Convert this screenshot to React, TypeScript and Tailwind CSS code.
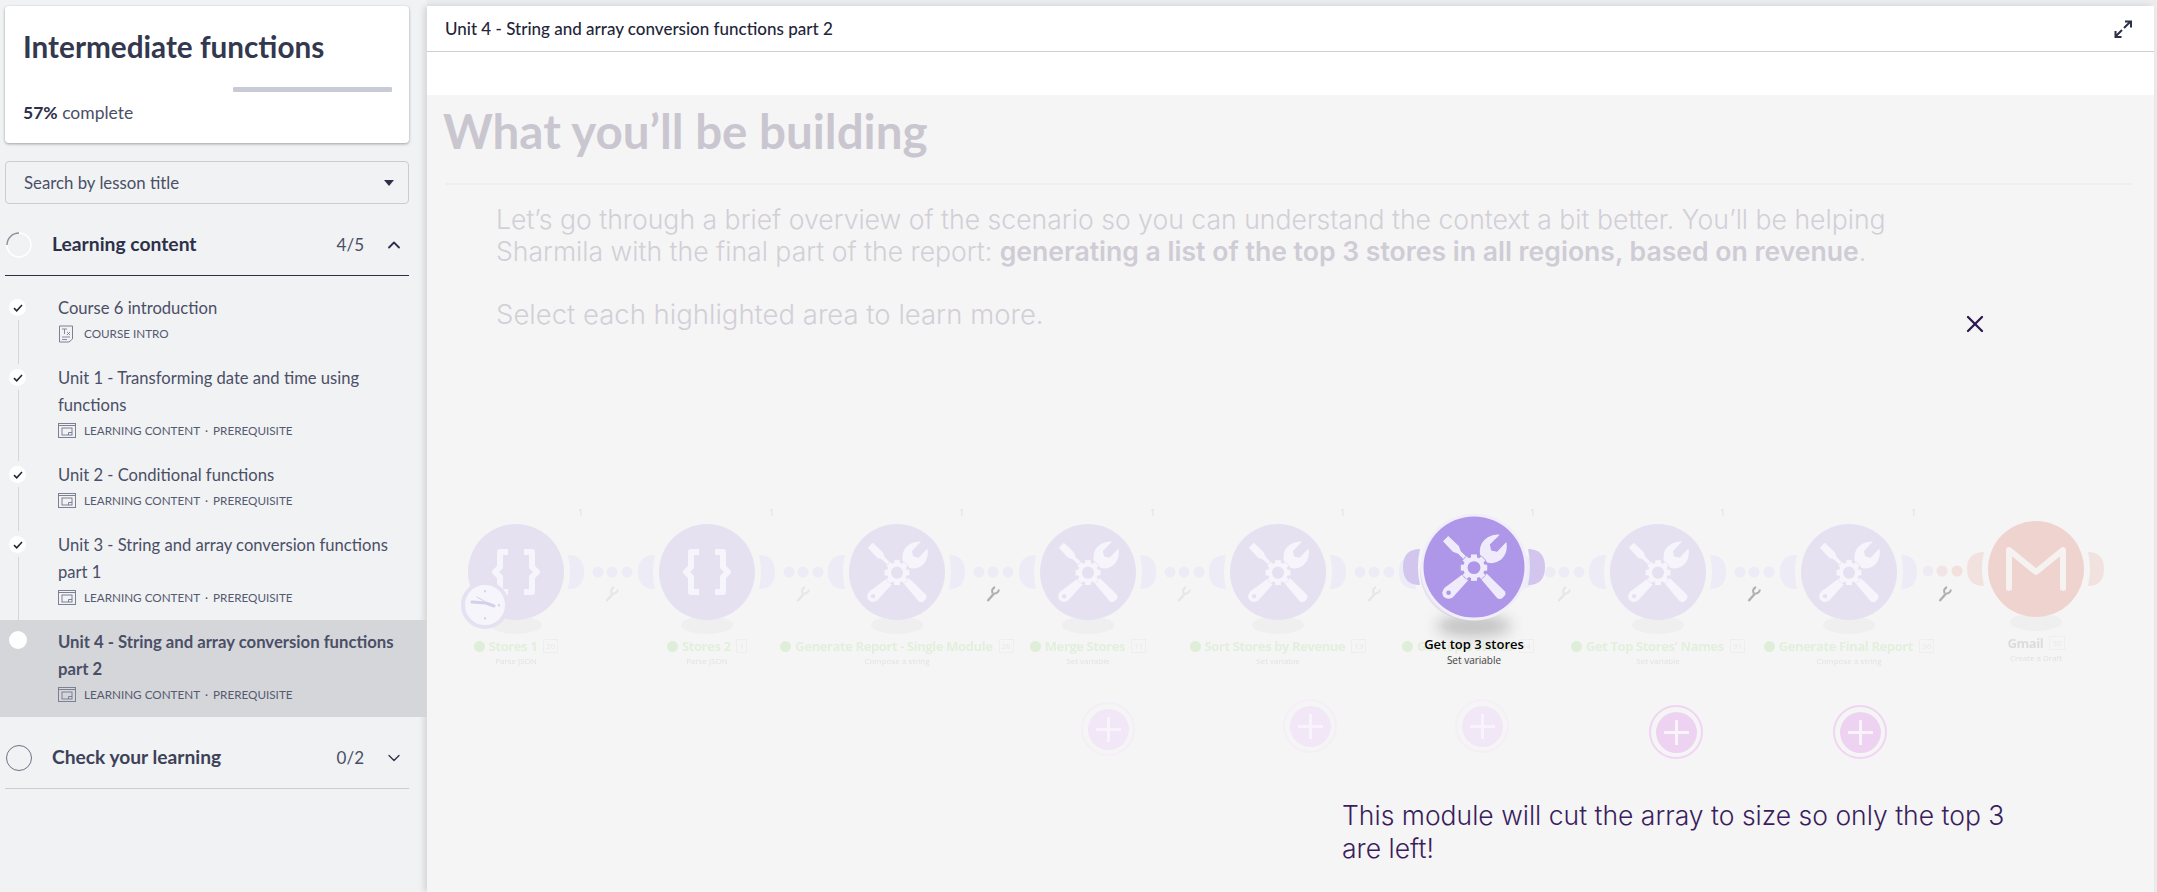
import { ChevronDown, ChevronUp, X } from "lucide-react";

const lessons = [
  { title: ["Course 6 introduction"], meta: "COURSE INTRO", doc: true },
  { title: ["Unit 1 - Transforming date and time using", "functions"], meta: "LEARNING CONTENT", prereq: true },
  { title: ["Unit 2 - Conditional functions"], meta: "LEARNING CONTENT", prereq: true },
  { title: ["Unit 3 - String and array conversion functions", "part 1"], meta: "LEARNING CONTENT", prereq: true },
];

// page coordinates of the scenario modules, read from the screenshot
const nodes = [
  { x: 516, y: 572, icon: "json", name: "Stores 1", sub: "Parse JSON", n: "20", w: 0, first: true },
  { x: 707, y: 572, icon: "json", name: "Stores 2", sub: "Parse JSON", n: "1", w: 0 },
  { x: 897, y: 572, icon: "tool", name: "Generate Report - Single Module", sub: "Compose a string", n: "28", w: 1 },
  { x: 1088, y: 572, icon: "tool", name: "Merge Stores", sub: "Set variable", n: "11", w: 0 },
  { x: 1278, y: 572, icon: "tool", name: "Sort Stores by Revenue", sub: "Set variable", n: "13", w: 0 },
  { x: 1468, y: 572, icon: "tool", name: "Get top 3 stores", sub: "Set variable", n: "14", w: 0 },
  { x: 1658, y: 572, icon: "tool", name: "Get Top Stores' Names", sub: "Set variable", n: "31", w: 1 },
  { x: 1849, y: 572, icon: "tool", name: "Generate Final Report", sub: "Compose a string", n: "36", w: 1, last: true },
];

const plusButtons = [
  { x: 1108, y: 729, strong: false },
  { x: 1310, y: 726, strong: false },
  { x: 1482, y: 726, strong: false },
  { x: 1676, y: 732, strong: true },
  { x: 1860, y: 732, strong: true },
];

function ToolIcon({ size, color, bg }: { size: number; color: string; bg: string }) {
  const teeth = [0, 45, 90, 135, 180, 225, 270, 315];
  return (
    <svg width={size} height={size} viewBox="0 0 100 100">
      <path d="M3 11 L11 3 L27 18 L30 26 L46 42 L42 46 L26 30 L18 27 Z" fill={color} />
      <path d="M58 65 L66 57 L97 87 Q99 90 96 94 L93 97 Q89 100 85 97 Z" fill={color} />
      <path d="M37 58 L45 66 L18 96 Q10 101 4 95 Q-1 88 6 81 Z" fill={color} />
      <circle cx="11.5" cy="89" r="3.5" fill={bg} />
      <path d="M52 44 L60 35 Q55 15 71 5 Q79 0 89 1 L74 16 L76 25 L85 27 L99 12 Q102 28 92 38 Q80 48 66 42 L57 50 Z" fill={color} />
      <circle cx="50" cy="51" r="21" fill={bg} />
      <g fill={color}>
        {teeth.map((a) => (
          <rect key={a} x="45.5" y="31" width="9" height="9" transform={`rotate(${a} 50 51)`} />
        ))}
      </g>
      <circle cx="50" cy="51" r="13" fill="none" stroke={color} strokeWidth="6.5" />
    </svg>
  );
}

function JsonIcon() {
  return (
    <svg width="50" height="46" viewBox="0 0 50 46" fill="none" stroke="#f6f5fb" strokeWidth="6" strokeLinejoin="round">
      <path d="M17 3 H9 V18 L4 23 L9 28 V43 H17" />
      <path d="M33 3 H41 V18 L46 23 L41 28 V43 H33" />
    </svg>
  );
}

function ModuleArt({ color, moon, first, noDots }: { color: string; moon: string; first?: boolean; noDots?: boolean }) {
  return (
    <svg width="240" height="140" viewBox="-70 -70 240 140" className="absolute -left-[70px] -top-[70px]">
      <ellipse cx="0" cy="53" rx="26" ry="9" fill="#efefef" />
      {!first && <path d="M-52 -17 Q-69 -17 -69 0 Q-69 17 -52 17 Q-56 0 -52 -17Z" fill={moon} />}
      <path d="M52 -17 Q68 -17 68 0 Q68 17 52 17 Q56 0 52 -17Z" fill={moon} />
      <circle r="48" fill={color} />
      {!noDots && [82, 96, 111].map((dx) => <circle key={dx} cx={dx} cy="0" r="5.5" fill={moon} />)}
    </svg>
  );
}

function Spanner({ dark }: { dark?: boolean }) {
  return (
    <svg width="14" height="16" viewBox="0 0 14 16" className="absolute left-[89px] top-[14px]" fill="none" stroke={dark ? "#b0b0b0" : "#e6e6e6"} strokeWidth="2.4">
      <path d="M1.5 15 L8.5 7" />
      <path d="M6.5 7.5 Q5 3 9 1 M8.5 7.5 Q12 7.5 13 3.5" strokeWidth="2" />
    </svg>
  );
}

function ModuleLabel({ name, sub, n, tone }: { name: string; sub: string; n: string; tone: string }) {
  return (
    <div className="absolute left-0 top-[64px] flex w-0 flex-col items-center">
      <div className="flex items-center gap-[4px] whitespace-nowrap blur-[0.5px]">
        {tone === "green" && <span className="h-[11px] w-[11px] rounded-full bg-[#dfeed8]" />}
        <span className={`text-[13px] font-bold leading-[20px] tracking-[-0.4px] ${tone === "green" ? "text-[#e3efdc]" : "text-[#dcdcdc]"}`}>{name}</span>
        <span className="ml-[2px] border border-[#eeeeee] px-[2px] text-[8px] leading-[12px] text-[#e8e8e8]">{n}</span>
      </div>
      <div className="whitespace-nowrap text-[8px] leading-[10px] text-[#e2e2e2] blur-[0.3px]">{sub}</div>
    </div>
  );
}

function Diagram() {
  return (
    <div className="absolute inset-0 font-['Open_Sans',sans-serif]">
      {nodes.map((node) => (
        <div key={node.x} className="absolute h-0 w-0" style={{ left: node.x - 427, top: node.y - 95 }}>
          <ModuleArt color="#e5e1f1" moon="#edebf5" first={node.first} noDots={node.last} />
          <div className="absolute -left-[31px] -top-[31px] flex h-[62px] w-[62px] items-center justify-center">
            {node.icon === "json" ? <JsonIcon /> : <ToolIcon size={62} color="#f6f5fb" bg="#e5e1f1" />}
          </div>
          <Spanner dark={node.w === 1} />
          <span className="absolute left-[62px] -top-[66px] text-[9px] text-[#dedede]">1</span>
          <ModuleLabel name={node.name} sub={node.sub} n={node.n} tone="green" />
        </div>
      ))}

      {/* clock badge on the trigger module */}
      <div className="absolute left-[34px] top-[486px] flex h-[48px] w-[48px] items-center justify-center rounded-full border-[4px] border-[#e5e1f1] bg-[#f6f5fb]">
        <svg width="36" height="36" viewBox="0 0 36 36" fill="none" stroke="#d6cfe9" strokeWidth="3" strokeLinecap="round">
          <path d="M5 15 L19 16 L27 19" />
          <path d="M10 10 L17 14" strokeWidth="1" />
          <path d="M18 4 V4.5 M18 31 V31.5 M32 18 V18.5" strokeWidth="2" />
        </svg>
      </div>

      {/* gmail module */}
      <div className="absolute h-0 w-0" style={{ left: 2036 - 427, top: 569 - 95 }}>
        <ModuleArt color="#efd3cf" moon="#f2e2df" noDots />
        <svg width="60" height="44" viewBox="0 0 60 44" className="absolute -left-[30px] -top-[22px]" fill="none" stroke="#f6f2f1" strokeWidth="6" strokeLinecap="round" strokeLinejoin="round">
          <path d="M3 41 V3 L30 25 L57 3 V41" />
        </svg>
        <ModuleLabel name="Gmail" sub="Create a Draft" n="30" tone="grey" />
      </div>
      <svg width="50" height="12" viewBox="0 0 50 12" className="absolute left-[1495px] top-[470px]">
        <circle cx="6" cy="6" r="5.5" fill="#eeebf4" />
        <circle cx="20" cy="6" r="5.5" fill="#f0e4e6" />
        <circle cx="35" cy="6" r="5.5" fill="#f2e0dd" />
      </svg>

      {/* highlighted module */}
      <div className="absolute h-0 w-0" style={{ left: 1474 - 427, top: 567 - 95 }}>
        <div className="absolute -left-[38px] top-[48px] h-[22px] w-[76px] rounded-[50%] bg-[#c4c4c4] blur-[7px]" />
        <svg width="160" height="110" viewBox="-80 -55 160 110" className="absolute -left-[80px] -top-[55px]">
          <path d="M-54 -18 Q-71 -18 -71 0 Q-71 18 -54 18 Q-58 0 -54 -18Z" fill="#d2c6ef" />
          <path d="M54 -18 Q71 -18 71 0 Q71 18 54 18 Q58 0 54 -18Z" fill="#d2c6ef" />
          <circle r="53.5" fill="#f1eef9" />
          <circle r="50.5" fill="#ae96e9" />
        </svg>
        <div className="absolute -left-[33px] -top-[33px]">
          <ToolIcon size={66} color="#efebfb" bg="#ae96e9" />
        </div>
        <div className="absolute left-0 top-[67px] flex w-0 flex-col items-center whitespace-nowrap">
          <span className="text-[13px] font-semibold leading-[20px] text-black">Get top 3 stores</span>
          <span className="text-[10px] leading-[13px] text-[#444444]">Set variable</span>
        </div>
      </div>

      {plusButtons.map((p) => (
        <div key={p.x} className="absolute h-0 w-0" style={{ left: p.x - 427, top: p.y - 95 }}>
          <div
            className={`absolute -left-[27px] -top-[27px] flex h-[54px] w-[54px] items-center justify-center rounded-full border-2 ${
              p.strong ? "border-[#f0d5f3]" : "border-[#f5eef7]"
            }`}
          >
            <div className={`relative h-[41px] w-[41px] rounded-full ${p.strong ? "bg-[#eed2f2]" : "bg-[#f2e7f6]"}`}>
              <span className="absolute left-[19px] top-[8px] h-[25px] w-[3px] bg-[#f9f4fb]" />
              <span className="absolute left-[8px] top-[19px] h-[3px] w-[25px] bg-[#f9f4fb]" />
            </div>
          </div>
        </div>
      ))}
    </div>
  );
}

function DocIcon() {
  return (
    <svg width="16" height="18" viewBox="0 0 16 18" fill="none" stroke="#7c8094" strokeWidth="1">
      <path d="M1.5 1 H14.5 V14 L11 17 H1.5 Z" />
      <path d="M4 4 H9 M6.5 4 V9 M9 7 L12 10 M12 7 L9 10 M4 12 H12 M4 14.5 H9" strokeWidth="0.9" />
    </svg>
  );
}

function ScreenIcon() {
  return (
    <svg width="18" height="15" viewBox="0 0 18 15" fill="none" stroke="#7c8094" strokeWidth="1">
      <rect x="0.5" y="0.5" width="17" height="14" />
      <path d="M1 2.5 H17" />
      <rect x="4" y="5" width="10" height="7" />
      <path d="M10.5 12 V9.5 H14" />
    </svg>
  );
}

function Meta({ doc, label, prereq }: { doc?: boolean; label: string; prereq?: boolean }) {
  return (
    <div className="flex h-[23px] items-center text-[11.7px] text-[#555a70]">
      <span className="flex w-[26px] items-center">{doc ? <DocIcon /> : <ScreenIcon />}</span>
      <span>{label}</span>
      {prereq && <span className="mx-[5px]">·</span>}
      {prereq && <span>PREREQUISITE</span>}
    </div>
  );
}

function CheckDot() {
  return (
    <span className="absolute left-[9px] top-[13px] flex h-[17px] w-[17px] items-center justify-center rounded-full bg-white">
      <svg width="10" height="8" viewBox="0 0 10 8" fill="none" stroke="#23253a" strokeWidth="1.6">
        <path d="M1 4.2 L3.7 6.8 L9 1" />
      </svg>
    </span>
  );
}

function Sidebar() {
  return (
    <aside className="flex w-[427px] shrink-0 flex-col bg-[#f1f2f4] font-['Lato',sans-serif] text-[#2c3149]">
      <div className="ml-[5px] mr-[18px] mt-[6px] h-[137px] rounded-[4px] bg-white px-[18px] pt-[21px] shadow-[0_1px_3px_rgba(0,0,0,0.35)]">
        <h1 className="text-[29.7px] font-bold leading-[40px] text-[#33384f]">Intermediate functions</h1>
        <div className="ml-[210px] mt-[20px] h-[5px] w-[159px] rounded-[1px] bg-[#c8cbd6]" />
        <p className="mt-[9px] text-[17.5px] leading-[24px] text-[#4a4f66]">
          <span className="font-bold text-[#2c3149]">57%</span> complete
        </p>
      </div>

      <div className="ml-[5px] mr-[18px] mt-[18px] flex h-[43px] items-center justify-between rounded-[4px] border border-[#c8ccd4] pl-[18px] pr-[14px] text-[16.8px] text-[#4a4f66]">
        Search by lesson title
        <span className="h-0 w-0 border-x-[5px] border-t-[6px] border-x-transparent border-t-[#2c3149]" />
      </div>

      <div className="ml-[5px] mr-[18px] mt-[10px] flex h-[62px] items-center border-b border-[#2c3149] pl-px pr-[5px]">
        <svg width="26" height="26" viewBox="0 0 26 26" fill="none">
          <circle cx="13" cy="13" r="12" stroke="#ffffff" strokeWidth="1.5" />
          <path d="M1 13 A12 12 0 0 1 13 1" stroke="#8b8f9e" strokeWidth="1.5" />
        </svg>
        <span className="ml-[20px] flex-1 text-[19.3px] font-bold">Learning content</span>
        <span className="text-[17px] text-[#4a4f66]">4/5</span>
        <ChevronUp size={20} strokeWidth={2.2} className="ml-[20px]" />
      </div>

      <div className="relative mt-[10px]">
        {lessons.map((l) => (
          <div key={l.title[0]} className="relative pb-[11px] pl-[58px] pt-[9px]">
            <CheckDot />
            <span className="absolute bottom-[-8px] left-[18px] top-[34px] w-px bg-[#d5d7dd]" />
            <div className="text-[16.6px] leading-[27px] text-[#4a4f66]">
              {l.title.map((line) => (
                <div key={line}>{line}</div>
              ))}
            </div>
            <Meta doc={l.doc} label={l.meta} prereq={l.prereq} />
          </div>
        ))}
        <div className="relative h-[97px] bg-[#d5d6da] pl-[58px] pt-[9px]">
          <span className="absolute left-[9px] top-[11px] h-[18px] w-[18px] rounded-full bg-white" />
          <div className="text-[16.7px] font-bold leading-[27px] text-[#4a4f66]">
            <div>Unit 4 - String and array conversion functions</div>
            <div>part 2</div>
          </div>
          <Meta label="LEARNING CONTENT" prereq />
        </div>
      </div>

      <div className="ml-[5px] mr-[18px] mt-[10px] flex h-[62px] items-center border-b border-[#c8ccd4] pl-px pr-[5px]">
        <span className="h-[26px] w-[26px] rounded-full border-[1.5px] border-[#6d7186]" />
        <span className="ml-[20px] flex-1 text-[19.2px] font-bold text-[#3c4158]">Check your learning</span>
        <span className="text-[17px] text-[#4a4f66]">0/2</span>
        <ChevronDown size={20} strokeWidth={1.6} className="ml-[20px]" />
      </div>
    </aside>
  );
}

export default function App() {
  return (
    <div className="flex h-screen w-full overflow-hidden bg-[#ebecee]">
      <Sidebar />
      <main className="mr-[3px] mt-[6px] flex flex-1 flex-col bg-white shadow-[-3px_0_6px_rgba(0,0,0,0.12)]">
        <header className="flex h-[46px] shrink-0 items-center justify-between border-b border-[#cfcfd2] pl-[18px] pr-[22px]">
          <span className="font-['Lato',sans-serif] text-[17px] font-medium text-[#23253a]">
            Unit 4 - String and array conversion functions part 2
          </span>
          <svg width="18" height="18" viewBox="0 0 18 18" fill="none" stroke="#2c3149" strokeWidth="2">
            <path d="M10 8 L16 2 M11 1.5 H17 V7.5" />
            <path d="M8 10 L2 16 M1.5 11 V17 H7.5" />
          </svg>
        </header>
        <div className="h-[43px] shrink-0" />
        <section className="relative flex-1 bg-[#f5f5f5] text-[#d2cfd7]">
          <h2 className="flex h-[88px] items-center pb-[16px] pl-[16px] font-['Lato',sans-serif] text-[47.5px] font-bold text-[#cac6d0]">
            What you’ll be building
          </h2>
          <div className="ml-[19px] mr-[22px] h-[2px] bg-[#eeeeef]" />
          <div className="ml-[69px] mt-[18px] font-['Inter',sans-serif] text-[26.6px] font-light leading-[32px]">
            <p>
              Let’s go through a brief overview of the scenario so you can understand the context a bit better. You’ll be helping
              <br />
              Sharmila with the final part of the report:{" "}
              <strong className="font-semibold text-[#cfccd5]">
                generating a list of the top 3 stores in all regions, based on revenue
              </strong>
              .
            </p>
            <p className="mt-[31px] text-[27.5px]">Select each highlighted area to learn more.</p>
          </div>

          <Diagram />

          <X size={28} strokeWidth={2} className="absolute left-[1534px] top-[215px] text-[#2d1a52]" />
          <p className="absolute left-[915px] top-[704px] font-['Inter',sans-serif] text-[26.5px] font-light leading-[33px] text-[#3b1d5e]">
            This module will cut the array to size so only the top 3
            <br />
            are left!
          </p>
        </section>
      </main>
    </div>
  );
}
